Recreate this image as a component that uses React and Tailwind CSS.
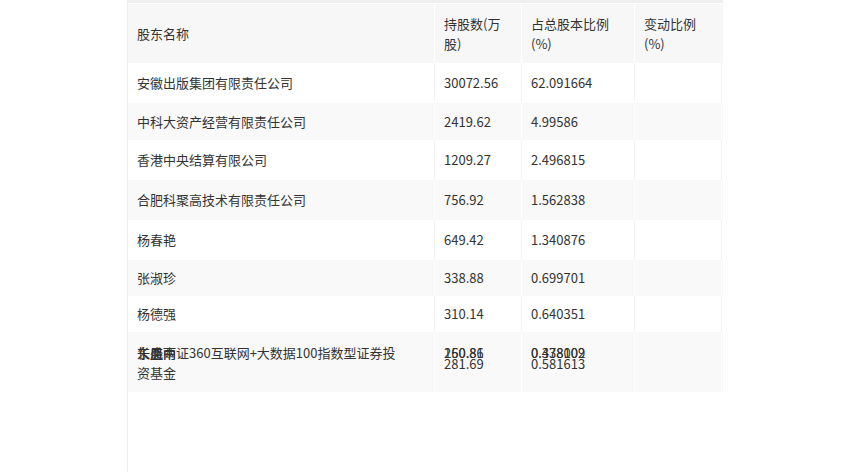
export default function App() {
  const font = { fontFamily: '"Noto Sans CJK SC", "Noto Sans", sans-serif' };
  const rows = [
    ["安徽出版集团有限责任公司", "30072.56", "62.091664", 40],
    ["中科大资产经营有限责任公司", "2419.62", "4.99586", 37],
    ["香港中央结算有限公司", "1209.27", "2.496815", 40],
    ["合肥科聚高技术有限责任公司", "756.92", "1.562838", 40],
    ["杨春艳", "649.42", "1.340876", 40],
    ["张淑珍", "338.88", "0.699701", 36],
    ["杨德强", "310.14", "0.640351", 36],
  ];
  return (
    <div className="w-[850px] h-[472px] bg-white overflow-hidden text-[13px] text-[#333]" style={font}>
      <div className="ml-[127px] w-[596px] h-[472px] border-l border-[#eeeeee]">
        <div className="h-[3px] bg-[#efefef]" />
        <div className="h-px bg-white" />
        <div className="grid grid-cols-[307px_87px_113px_87px] h-[59px] bg-[#f7f7f7] leading-[20px]">
          <div className="flex items-center pl-[9px] border-r border-white">股东名称</div>
          <div className="flex items-center pl-[9px] border-r border-white">持股数(万<br />股)</div>
          <div className="flex items-center pl-[9px] border-r border-white">占总股本比例<br />(%)</div>
          <div className="flex items-center pl-[9px]">变动比例<br />(%)</div>
        </div>
        {rows.map((r, i) => (
          <div
            key={i}
            className={
              "grid grid-cols-[307px_87px_113px_87px] " +
              (i % 2 === 1 ? "bg-[#f9f9f9]" : "bg-white")
            }
            style={{ height: r[3] }}
          >
            <div className={"flex items-center pl-[9px] border-r " + (i % 2 === 1 ? "border-white" : "border-[#f3f3f3]")}>{r[0]}</div>
            <div className={"flex items-center pl-[9px] border-r " + (i % 2 === 1 ? "border-white" : "border-[#f3f3f3]")}>{r[1]}</div>
            <div className={"flex items-center pl-[9px] border-r " + (i % 2 === 1 ? "border-white" : "border-[#f3f3f3]")}>{r[2]}</div>
            <div className={"border-r " + (i % 2 === 1 ? "border-white" : "border-[#f3f3f3]")} />
          </div>
        ))}
        <div className="grid grid-cols-[307px_87px_113px_87px] h-[60px] bg-[#f9f9f9]">
          <div className="relative border-r border-white">
            <div className="absolute left-[9px] top-[11px] w-[265px] leading-[20px]">长盛中证360互联网+大数据100指数型证券投资基金</div>
            <div className="absolute left-[9px] top-[11px] leading-[20px]">朱晨雨</div>
            <div className="absolute left-[9px] top-[11px] leading-[20px]">东凤两</div>
          </div>
          <div className="relative border-r border-white">
            <div className="absolute left-[9px] top-[11px] leading-[20px]">260.86</div>
            <div className="absolute left-[9px] top-[11px] leading-[20px]">150.81</div>
            <div className="absolute left-[9px] top-[22px] leading-[20px]">281.69</div>
          </div>
          <div className="relative border-r border-white">
            <div className="absolute left-[9px] top-[11px] leading-[20px]">0.438009</div>
            <div className="absolute left-[9px] top-[11px] leading-[20px]">0.378102</div>
            <div className="absolute left-[9px] top-[22px] leading-[20px]">0.581613</div>
          </div>
          <div className="border-r border-white" />
        </div>
      </div>
    </div>
  );
}
